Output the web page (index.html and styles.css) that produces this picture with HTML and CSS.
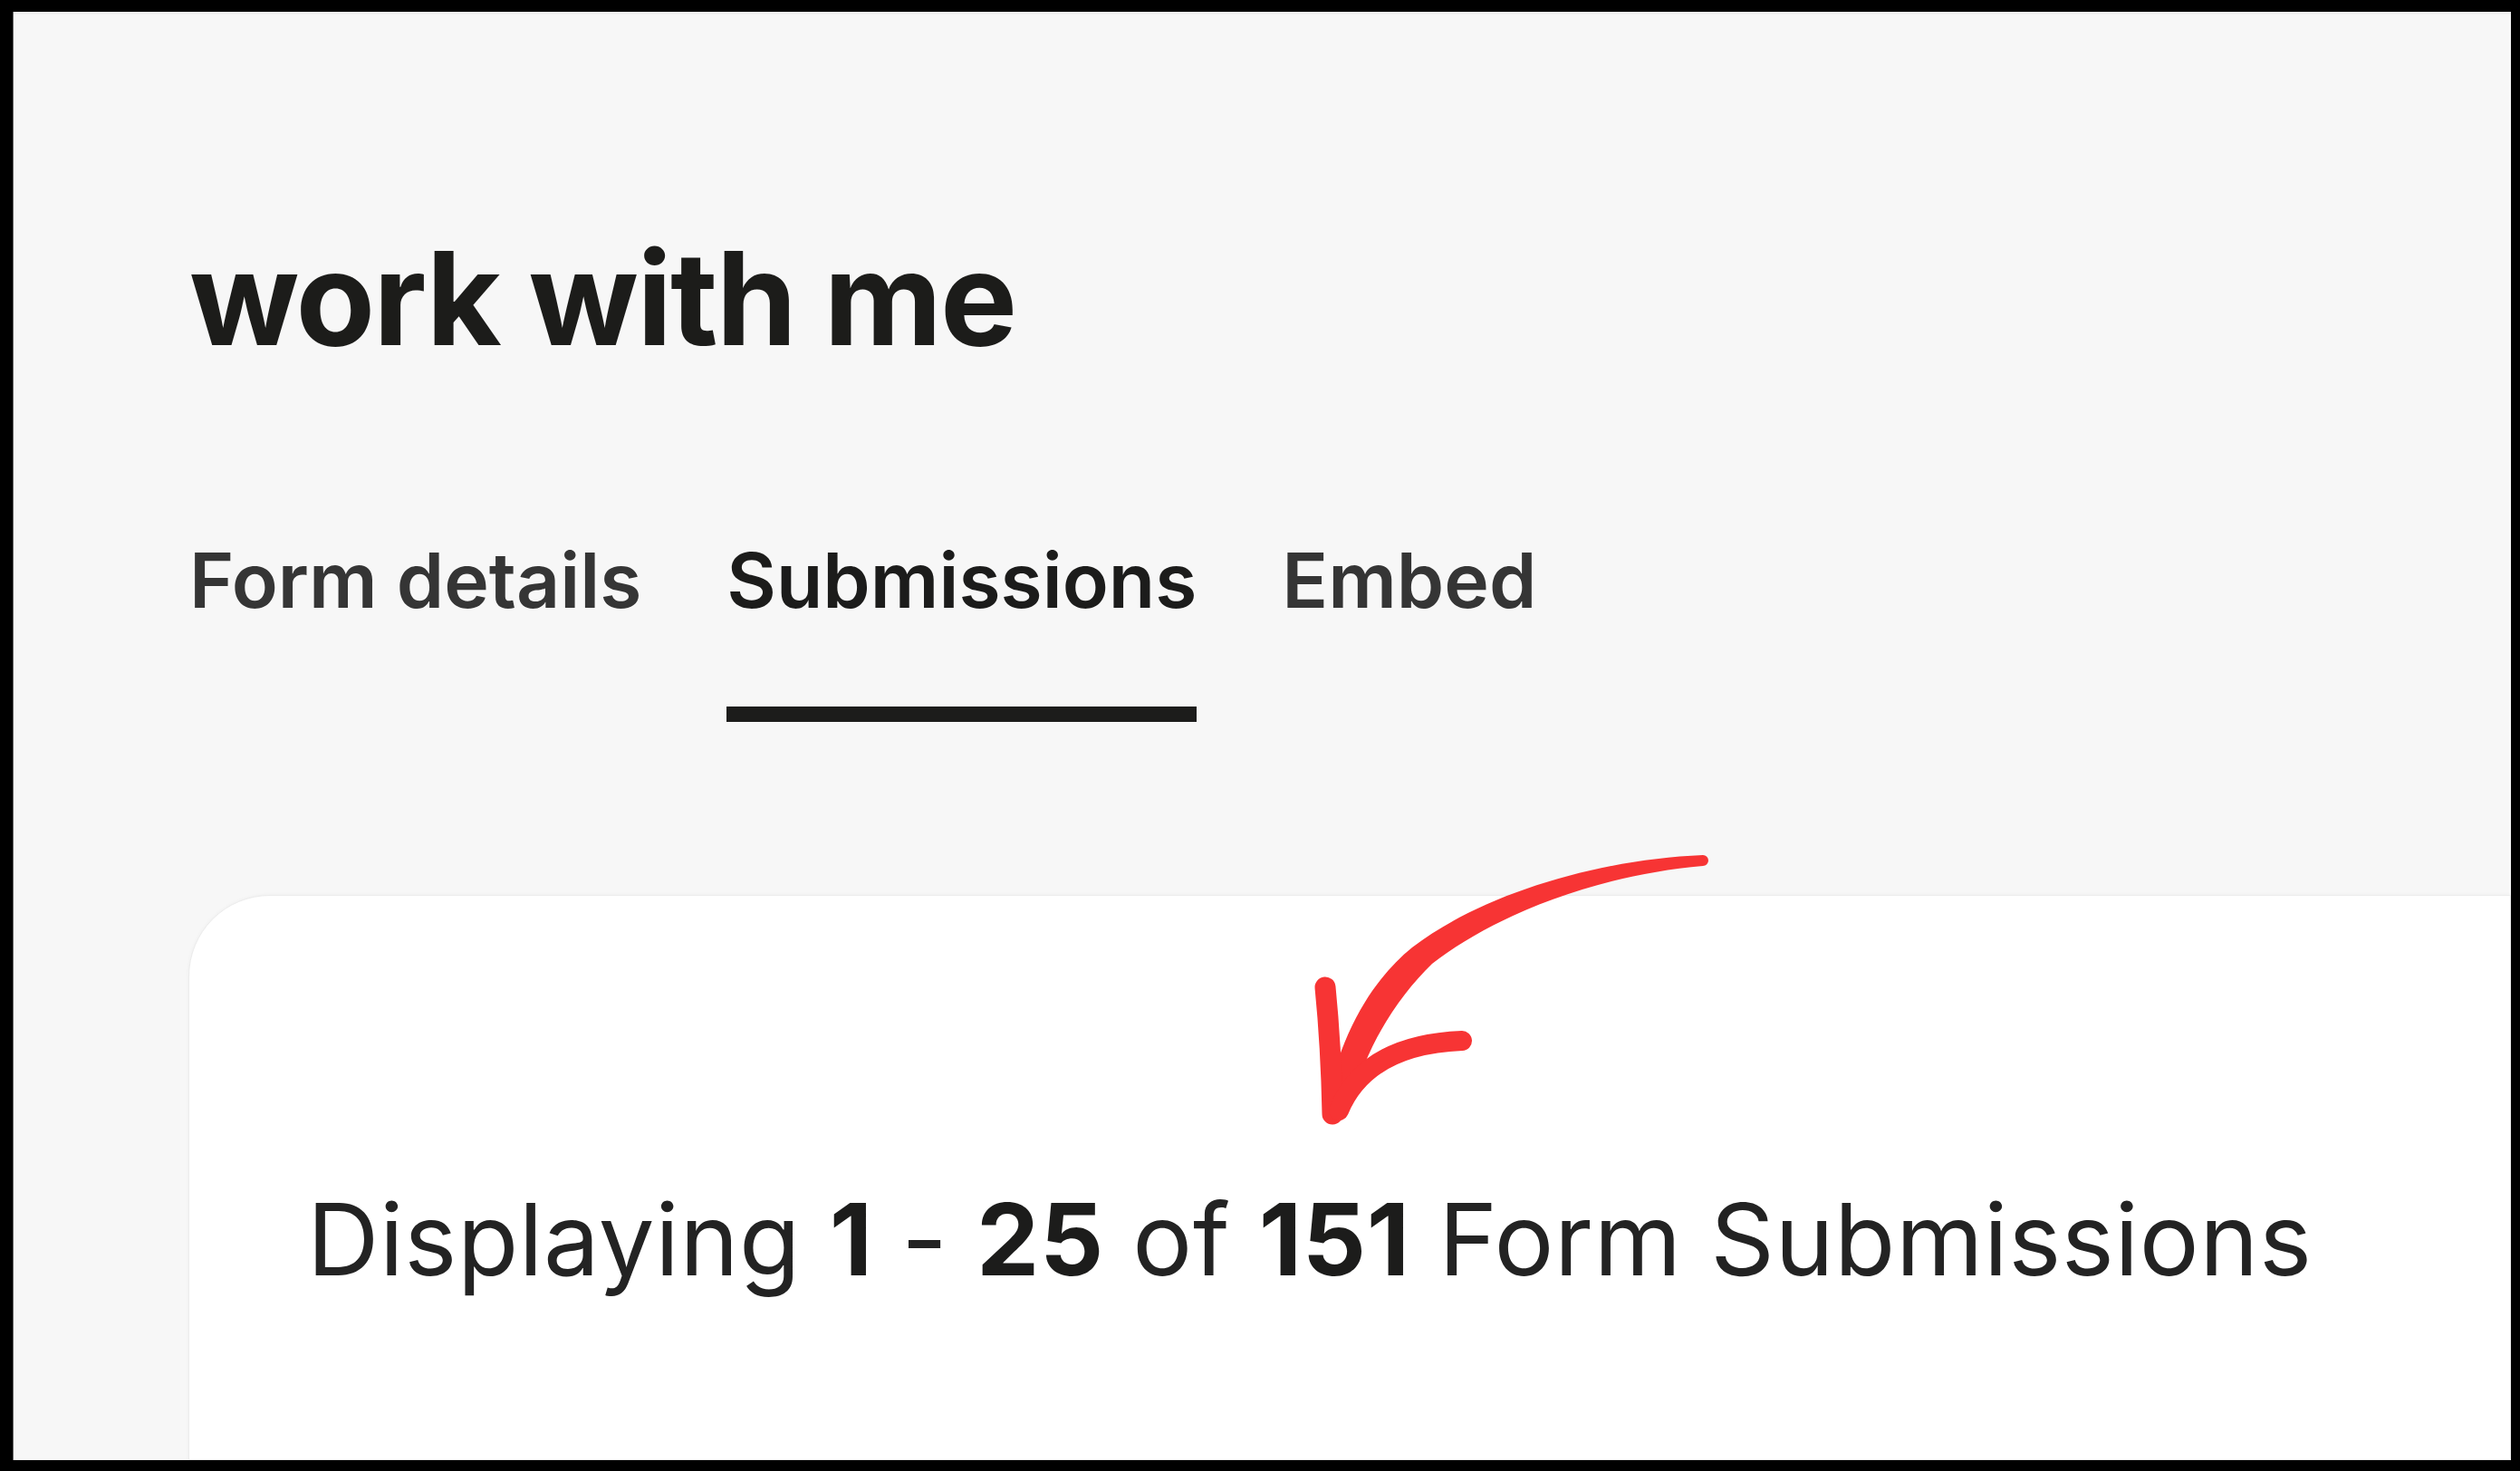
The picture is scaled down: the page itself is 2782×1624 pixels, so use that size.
FILE: index.html
```html
<!DOCTYPE html>
<html lang="en">
<head>
<meta charset="utf-8">
<title>work with me – Submissions</title>
<link rel="stylesheet" href="styles.css">
</head>
<body>
<div class="frame">
  <div class="screen">
    <header class="page-head">
      <h1 class="title">work with me</h1>
      <nav class="tabs">
        <a class="tab">Form details</a>
        <a class="tab active">Submissions</a>
        <a class="tab">Embed</a>
      </nav>
    </header>
    <section class="card">
      <p class="summary">Displaying <b>1</b> - <b>25</b> of <b>151</b> Form Submissions</p>
    </section>
    <svg class="arrow" viewBox="0 0 460 330" width="460" height="330" aria-hidden="true">
      <path fill="#f73434" d="M440,14 C320,19 193,59 119,116 C76,151 40,208 23,294 L50,294 C68,224 103,171 141,134 C207,82 322,36 440,26 A6,6 0 0 0 440,14 Z"/>
      <g fill="none" stroke="#f73434" stroke-linecap="round" stroke-linejoin="round">
        <path d="M23,160 C27,200 30,250 31,300" stroke-width="23"/>
        <path d="M38,296 C57,250 100,222 174,219" stroke-width="22"/>
      </g>
    </svg>
  </div>
</div>
</body>
</html>
```

FILE: styles.css
```css
* {
  box-sizing: border-box;
}

html, body {
  margin: 0;
  padding: 0;
  background: #000;
}

body {
  font-family: "Inter", "Liberation Sans", sans-serif;
  color: #1c1c1b;
}

.frame {
  width: 2782px;
  height: 1624px;
  border-style: solid;
  border-color: #000;
  border-width: 13px 10px 12px 14px;
  background: #000;
}

.screen {
  position: relative;
  width: 100%;
  height: 100%;
  background: #f7f7f7;
  overflow: hidden;
  box-shadow: inset 1px 0 0 #6a6a6a, inset 0 3px 3px -1px rgba(0, 0, 0, 0.05);
  display: flex;
  flex-direction: column;
}

.page-head {
  padding: 244px 0 0 195px;
}

.title {
  margin: 0;
  font-size: 143px;
  line-height: 1;
  font-weight: 700;
  letter-spacing: -2px;
  color: #1c1c1a;
}

.tabs {
  display: flex;
  gap: 94px;
  margin-top: 199px;
}

.tab {
  font-size: 84px;
  line-height: 1;
  font-weight: 600;
  color: #353535;
  padding-bottom: 97px;
  border-bottom: 17px solid transparent;
}

.tab.active {
  color: #1c1c1b;
  border-bottom-color: #1c1c1b;
}

.card {
  margin: 191px 0 0 194px;
  flex: 1;
  background: #fff;
  border: 1px solid #ececec;
  border-radius: 90px 0 0 0;
  box-shadow: 0 0 4px rgba(0, 0, 0, 0.04);
  padding: 324px 0 0 130px;
}

.summary {
  margin: 0;
  font-size: 110px;
  line-height: 1;
  font-weight: 400;
  letter-spacing: 0.6px;
  color: #232323;
}

.summary b {
  font-weight: 700;
  color: #1c1c1b;
}

.arrow {
  position: absolute;
  left: 1426px;
  top: 917px;
}
```
